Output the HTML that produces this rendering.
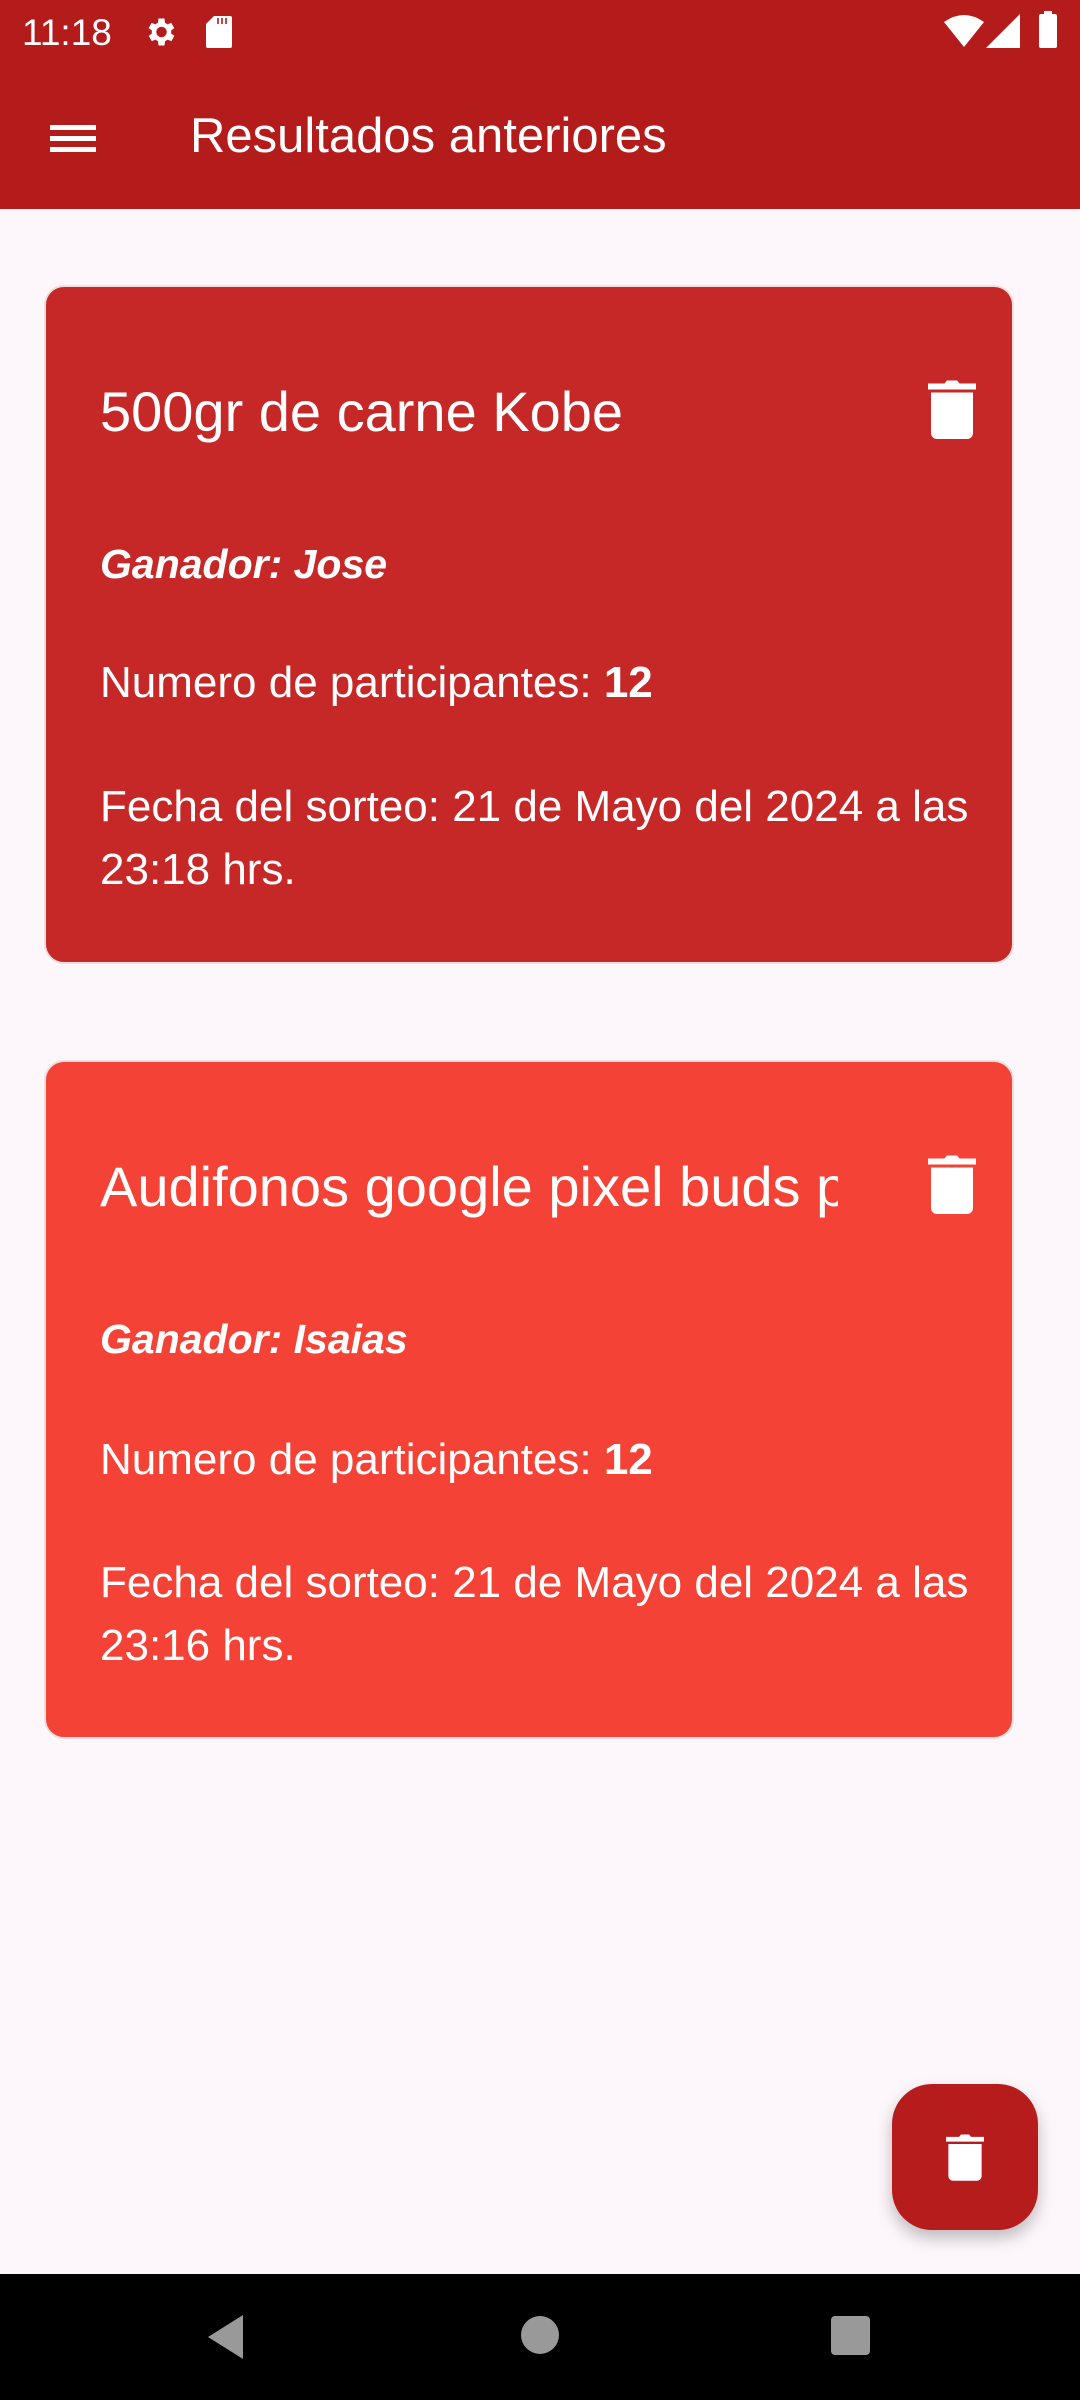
<!DOCTYPE html>
<html><head><meta charset="utf-8"><style>
*{margin:0;padding:0;box-sizing:border-box}
body{width:1080px;height:2400px;background:#fdf7fb;font-family:"Liberation Sans",sans-serif;position:relative;overflow:hidden;color:#fff}
.bar{position:absolute;left:0;top:0;width:1080px;height:209px;background:#b41c1c}
.abs{position:absolute}
.card{position:absolute;left:44px;width:970px;height:679px;border-radius:20px;border:2px solid #f3dede}
.t{position:absolute;left:54px;font-size:56px;white-space:nowrap;overflow:hidden;width:738px}
.g{position:absolute;left:54px;font-size:41px;font-weight:bold;font-style:italic}
.n{position:absolute;left:54px;font-size:44px;line-height:63px;white-space:nowrap}
.trash{position:absolute;left:882px;width:48px;height:62px}
</style></head><body>
<div class="bar"></div>
<div class="abs" style="left:22px;top:12px;font-size:37px">11:18</div>
<svg class="abs" style="left:142px;top:14px" width="36" height="36" viewBox="0 0 24 24"><path fill="#fff" d="M19.4 13a7.5 7.5 0 0 0 0-2l2.1-1.6-2-3.5-2.5 1a7 7 0 0 0-1.7-1L15 3h-4l-.4 2.9a7 7 0 0 0-1.7 1l-2.5-1-2 3.5L6.6 11a7.5 7.5 0 0 0 0 2l-2.1 1.6 2 3.5 2.5-1a7 7 0 0 0 1.7 1L11 21h4l.4-2.9a7 7 0 0 0 1.7-1l2.5 1 2-3.5zM13 15.5a3.5 3.5 0 1 1 0-7 3.5 3.5 0 0 1 0 7z"/></svg>
<svg class="abs" style="left:206px;top:16px" width="26" height="32" viewBox="0 0 13 16"><path fill="#fff" d="M4 0h8a1 1 0 0 1 1 1v14a1 1 0 0 1-1 1H1a1 1 0 0 1-1-1V4z"/><path stroke="#b41c1c" stroke-width=".8" d="M6 1v3M8 1v3M10 1v3"/></svg>
<svg class="abs" style="left:944px;top:14px" width="40" height="34" viewBox="0 0 40 34"><path fill="#fff" d="M0 8Q20-6 40 8L20 33z"/></svg>
<svg class="abs" style="left:986px;top:14px" width="34" height="34" viewBox="0 0 34 34"><path fill="#fff" d="M34 0V34H0z"/></svg>
<div class="abs" style="left:1039px;top:14px;width:18px;height:34px;background:#fff;border-radius:2px"></div>
<div class="abs" style="left:1044px;top:11px;width:8px;height:4px;background:#fff"></div>
<div class="abs" style="left:50px;top:125px;width:46px;height:5px;background:#fff"></div>
<div class="abs" style="left:50px;top:136px;width:46px;height:5px;background:#fff"></div>
<div class="abs" style="left:50px;top:147px;width:46px;height:5px;background:#fff"></div>
<div class="abs" style="left:190px;top:108px;font-size:49px">Resultados anteriores</div>

<div class="card" style="top:285px;background:#c62828">
<div class="t" style="top:92px">500gr de carne Kobe</div>
<svg class="trash" style="top:91px" viewBox="0 0 16 20"><path fill="#fff" d="M0 1.5h5.5L6.3.5h3.4l.8 1H16v2H0zM1 4.5h14V18a2 2 0 0 1-2 2H3a2 2 0 0 1-2-2z"/></svg>
<div class="g" style="top:254px">Ganador: Jose</div>
<div class="n" style="top:364px">Numero de participantes: <b>12</b></div>
<div class="n" style="top:488px">Fecha del sorteo: 21 de Mayo del 2024 a las<br>23:18 hrs.</div>
</div>

<div class="card" style="top:1060px;background:#f44336">
<div class="t" style="top:92px">Audifonos google pixel buds pro</div>
<svg class="trash" style="top:91px" viewBox="0 0 16 20"><path fill="#fff" d="M0 1.5h5.5L6.3.5h3.4l.8 1H16v2H0zM1 4.5h14V18a2 2 0 0 1-2 2H3a2 2 0 0 1-2-2z"/></svg>
<div class="g" style="top:254px">Ganador: Isaias</div>
<div class="n" style="top:366px">Numero de participantes: <b>12</b></div>
<div class="n" style="top:489px">Fecha del sorteo: 21 de Mayo del 2024 a las<br>23:16 hrs.</div>
</div>

<div class="abs" style="left:892px;top:2084px;width:146px;height:146px;border-radius:40px;background:#b71c1c;box-shadow:0 8px 16px rgba(0,0,0,.25)"></div>
<svg class="abs" style="left:946px;top:2133px" width="38" height="48" viewBox="0 0 16 20"><path fill="#fff" d="M0 1.5h5.5L6.3.5h3.4l.8 1H16v2H0zM1 4.5h14V18a2 2 0 0 1-2 2H3a2 2 0 0 1-2-2z"/></svg>

<div class="abs" style="left:0;top:2274px;width:1080px;height:126px;background:#000"></div>
<svg class="abs" style="left:206px;top:2314px" width="40" height="46" viewBox="0 0 40 46"><path fill="#999" d="M37 1V45L2 23z"/></svg>
<div class="abs" style="left:521px;top:2316px;width:38px;height:38px;border-radius:50%;background:#999"></div>
<div class="abs" style="left:831px;top:2316px;width:39px;height:39px;border-radius:4px;background:#999"></div>
</body></html>
